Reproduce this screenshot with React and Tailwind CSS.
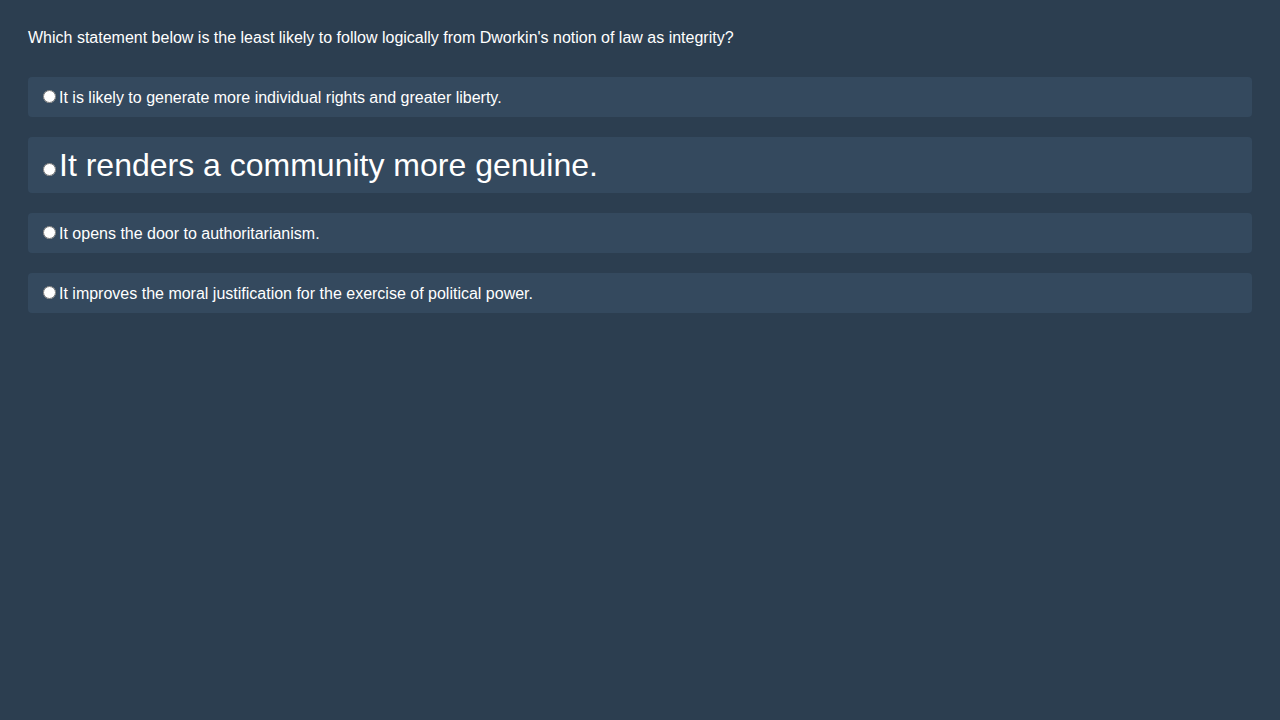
export default function App() {
  const opts = [
    { t: "It is likely to generate more individual rights and greater liberty.", big: false },
    { t: "It renders a community more genuine.", big: true },
    { t: "It opens the door to authoritarianism.", big: false },
    { t: "It improves the moral justification for the exercise of political power.", big: false },
  ];
  return (
    <div className="min-h-[720px] w-full bg-[#2c3e50] p-[28px] text-white" style={{ fontFamily: '"Liberation Sans", Arial, sans-serif' }}>
      <p className="text-[16px] leading-[18px] mt-[1px] mb-[30px]">
        Which statement below is the least likely to follow logically from Dworkin's notion of law as integrity?
      </p>
      <div className="flex flex-col gap-[20px]">
        {opts.map((o, i) => (
          <label key={i} className={"block rounded-[4px] bg-[#34495e] px-[10px] py-[10px] " + (o.big ? "h-[56px] text-[32px] leading-[36px]" : "h-[40px] text-[16px] leading-[20px]")}>
            <input type="radio" name="q" className="ml-[5px] mr-[3px] mt-[3px] align-baseline" />
            <span>{o.t}</span>
          </label>
        ))}
      </div>
    </div>
  );
}
